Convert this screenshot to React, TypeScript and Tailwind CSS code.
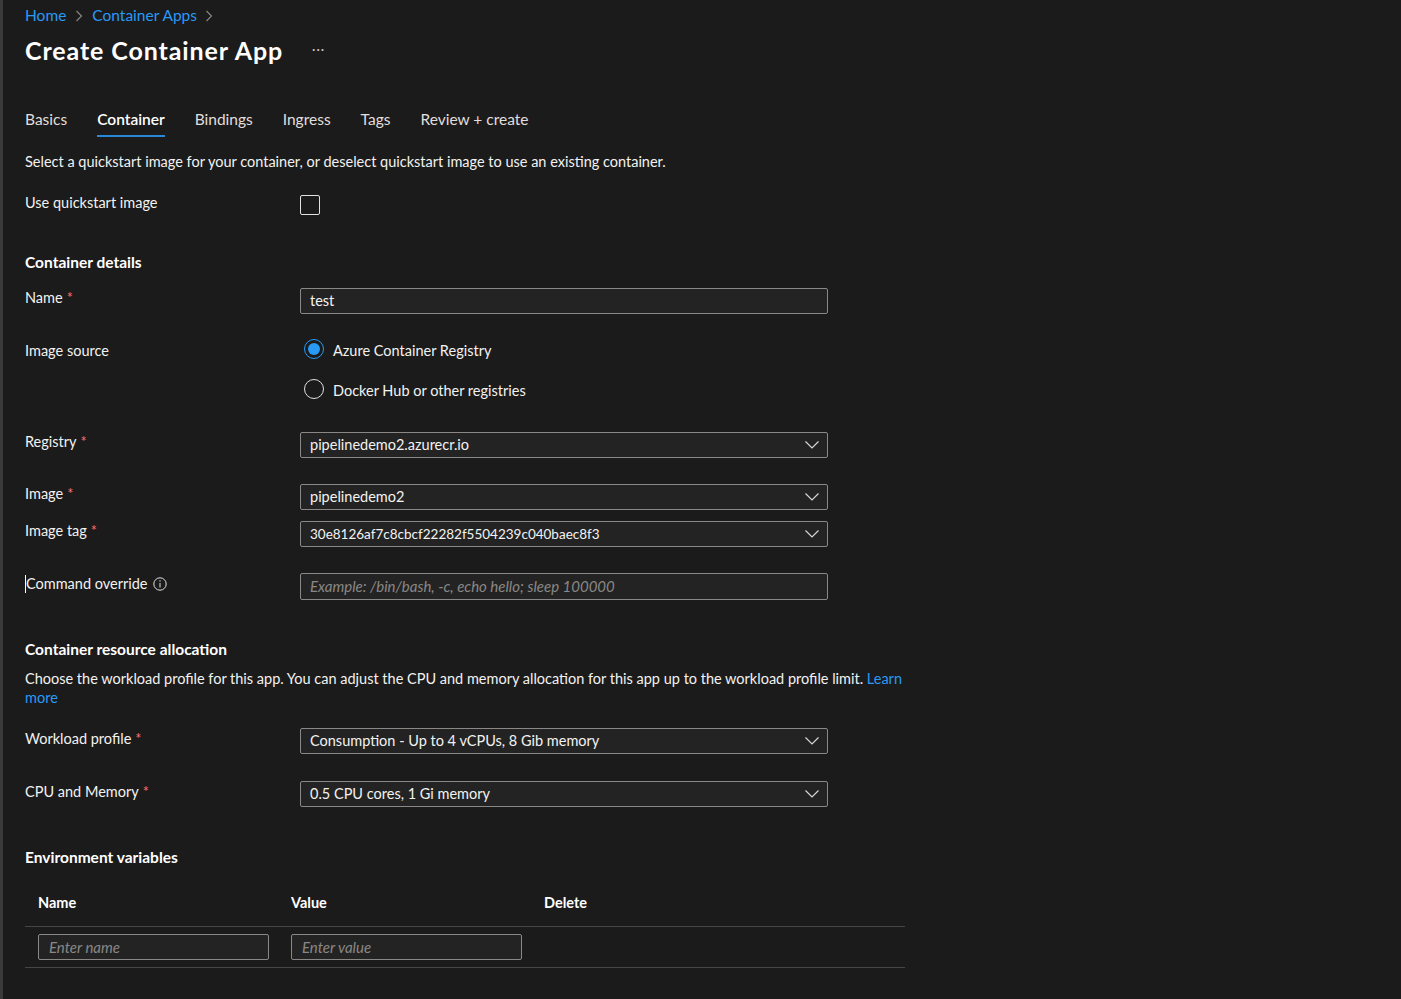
import React from "react";

const FONT = { fontFamily: "Lato, 'Noto Sans', sans-serif" };

function Chevron() {
  return (
    <svg width="14" height="8" viewBox="0 0 14 8" className="shrink-0">
      <polyline points="0.5,0.5 7,7 13.5,0.5" fill="none" stroke="#d6d6d6" strokeWidth="1.2" />
    </svg>
  );
}

function Req() {
  return <span className="ml-[4px] text-[#f1707b]">*</span>;
}

function Dropdown({ value, small }: { value: string; small?: boolean }) {
  return (
    <div
      className={`flex h-[26px] w-[528px] items-center justify-between rounded-[2px] border border-[#8a8886] bg-[#232323] pl-[9px] pr-[8px] ${
        small ? "text-[13.5px]" : "text-[14.5px]"
      } text-[#f3f2f1]`}
    >
      <span>{value}</span>
      <Chevron />
    </div>
  );
}

function TextBox({ value, placeholder, h = "h-[26px]" }: { value?: string; placeholder?: string; h?: string }) {
  return (
    <div className={`flex ${h} w-[528px] items-center rounded-[2px] border border-[#8a8886] bg-[#232323] pl-[9px]`}>
      {value ? (
        <span className="text-[14.5px] text-[#f3f2f1]">{value}</span>
      ) : (
        <span className="text-[15px] italic text-[#8a8886]">{placeholder}</span>
      )}
    </div>
  );
}

function Row({ label, children, className = "" }: { label: React.ReactNode; children: React.ReactNode; className?: string }) {
  return (
    <div className={`flex items-start ${className}`}>
      <div className="w-[275px] shrink-0 text-[14.5px] leading-5 text-[#f3f2f1]">{label}</div>
      {children}
    </div>
  );
}

function Radio({ checked, label }: { checked?: boolean; label: string }) {
  return (
    <div className="flex h-[20px] items-center">
      <span
        className={`ml-[4px] flex h-[20px] w-[20px] items-center justify-center rounded-full border ${
          checked ? "border-[#2899f5]" : "border-[#e1e1e1]"
        }`}
      >
        {checked && <span className="h-[12px] w-[12px] rounded-full bg-[#2899f5]" />}
      </span>
      <span className="ml-[9px] pt-[3px] text-[14.5px] text-[#f3f2f1]">{label}</span>
    </div>
  );
}

export default function App() {
  const tabs = ["Basics", "Container", "Bindings", "Ingress", "Tags", "Review + create"];
  return (
    <div className="flex min-h-[999px] w-full bg-[#1b1b1b]" style={FONT}>
      <div className="w-[3px] shrink-0 bg-[#3a3a3a]" />
      <div className="flex-1 pl-[22px]">
        {/* breadcrumb */}
        <div className="mt-[6px] flex h-[20px] items-center text-[15.5px] text-[#2899f5]">
          <span>Home</span>
          <svg width="8" height="12" viewBox="0 0 8 12" className="mx-[9px]">
            <polyline points="1.5,1 6.5,6 1.5,11" fill="none" stroke="#8a8886" strokeWidth="1.1" />
          </svg>
          <span>Container Apps</span>
          <svg width="8" height="12" viewBox="0 0 8 12" className="ml-[8px]">
            <polyline points="1.5,1 6.5,6 1.5,11" fill="none" stroke="#8a8886" strokeWidth="1.1" />
          </svg>
        </div>
        {/* title */}
        <div className="mt-[8px] flex h-[32px] items-center">
          <h1 className="text-[25px] font-bold leading-8 tracking-[0.9px] text-white">Create Container App</h1>
          <span className="ml-[29px] text-[13px] tracking-[1px] text-[#c8c6c4]">···</span>
        </div>
        {/* tabs */}
        <div className="mt-[37px] flex h-[34px] items-start gap-[30px] text-[15.5px]">
          {tabs.map((t) => (
            <div
              key={t}
              className={`h-[34px] pt-[6px] leading-5 ${
                t === "Container" ? "border-b-2 border-[#2b88d8] font-semibold text-white" : "text-[#e1dfdd]"
              }`}
            >
              {t}
            </div>
          ))}
        </div>
        <p className="mt-[15px] text-[14.5px] leading-5 text-[#f3f2f1]">
          Select a quickstart image for your container, or deselect quickstart image to use an existing container.
        </p>
        <Row label="Use quickstart image" className="mt-[21px]">
          <div className="mt-[2px] h-[20px] w-[20px] rounded-[2px] border border-[#e1e1e1]" />
        </Row>

        <h2 className="mt-[37px] text-[15.5px] font-bold leading-5 text-white">Container details</h2>
        <Row label={<>Name<Req /></>} className="mt-[16px]">
          <TextBox value="test" />
        </Row>
        <Row label={<span className="block pt-[2px]">Image source</span>} className="mt-[25px]">
          <div className="flex flex-col gap-[20px]">
            <Radio checked label="Azure Container Registry" />
            <Radio label="Docker Hub or other registries" />
          </div>
        </Row>
        <Row label={<>Registry<Req /></>} className="mt-[33px]">
          <Dropdown value="pipelinedemo2.azurecr.io" />
        </Row>
        <Row label={<>Image<Req /></>} className="mt-[26px]">
          <Dropdown value="pipelinedemo2" />
        </Row>
        <Row label={<>Image tag<Req /></>} className="mt-[11px]">
          <Dropdown value="30e8126af7c8cbcf22282f5504239c040baec8f3" small />
        </Row>
        <Row
          label={
            <span className="flex items-center pt-[1px]">
              <span className="h-[18px] w-px bg-white" />
              <span>Command override</span>
              <svg width="14" height="14" viewBox="0 0 14 14" className="ml-[5px]">
                <circle cx="7" cy="7" r="6.2" fill="none" stroke="#e1e1e1" strokeWidth="1" />
                <line x1="7" y1="6" x2="7" y2="10.5" stroke="#e1e1e1" strokeWidth="1" />
                <circle cx="7" cy="4" r="0.7" fill="#e1e1e1" />
              </svg>
            </span>
          }
          className="mt-[26px]"
        >
          <TextBox placeholder="Example: /bin/bash, -c, echo hello; sleep 100000" h="h-[27px]" />
        </Row>

        <h2 className="mt-[39px] text-[15.5px] font-bold leading-5 text-white">Container resource allocation</h2>
        <p className="mt-[10px] w-[890px] text-[14.5px] leading-[19px] text-[#f3f2f1]">
          <span>
            Choose the workload profile for this app. You can adjust the CPU and memory allocation for this app up to
            the workload profile limit.
          </span>{" "}
          <span className="text-[#2899f5]">Learn</span> <span className="text-[#2899f5]">more</span>
        </p>
        <Row label={<span className="block pt-[1px]">Workload profile<Req /></span>} className="mt-[21px]">
          <Dropdown value="Consumption - Up to 4 vCPUs, 8 Gib memory" />
        </Row>
        <Row label={<span className="block pt-[1px]">CPU and Memory<Req /></span>} className="mt-[27px]">
          <Dropdown value="0.5 CPU cores, 1 Gi memory" />
        </Row>

        <h2 className="mt-[40px] text-[15.5px] font-bold leading-5 text-white">Environment variables</h2>
        <div className="mt-[12px] w-[880px]">
          <div className="flex h-[48px] items-center border-b border-[#484644] pl-[13px] text-[14.5px] font-bold text-white">
            <div className="w-[253px]">Name</div>
            <div className="w-[253px]">Value</div>
            <div>Delete</div>
          </div>
          <div className="flex h-[41px] items-start gap-[22px] border-b border-[#484644] pl-[13px] pt-[7px]">
            <div className="flex h-[26px] w-[231px] items-center rounded-[2px] border border-[#8a8886] bg-[#232323] pl-[10px] text-[15px] italic text-[#8a8886]">
              Enter name
            </div>
            <div className="flex h-[26px] w-[231px] items-center rounded-[2px] border border-[#8a8886] bg-[#232323] pl-[10px] text-[15px] italic text-[#8a8886]">
              Enter value
            </div>
          </div>
        </div>
      </div>
    </div>
  );
}
